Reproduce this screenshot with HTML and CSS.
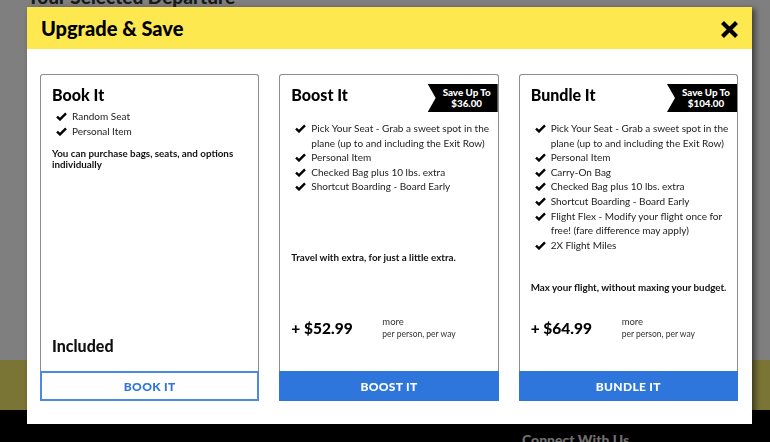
FILE: index.html
```html
<!DOCTYPE html>
<html lang="en">
<head>
  <meta charset="UTF-8">
  <meta name="viewport" content="width=device-width, initial-scale=1.0">
  <title>Upgrade &amp; Save</title>
  <link rel="stylesheet" href="styles.css">
</head>
<body>
  <div class="page">
    <h1 class="page-title">Your Selected Departure</h1>
    <div class="page-fill"></div>
    <div class="promo-band"></div>
    <footer class="footer">
      <h3>Connect With Us</h3>
    </footer>
  </div>

  <div class="backdrop"></div>

  <div class="modal">
    <div class="modal-header">
      <h2>Upgrade &amp; Save</h2>
      <button class="close" aria-label="Close">
        <svg width="19" height="19" viewBox="0 0 19 19"><path d="M2.5 2.5 L16.5 16.5 M16.5 2.5 L2.5 16.5" stroke="#000" stroke-width="4.2" fill="none"/></svg>
      </button>
    </div>

    <div class="options">
      <div class="option">
        <div class="option-body">
          <div>
            <div class="option-head">
              <h3>Book It</h3>
            </div>
            <ul class="perks">
              <li>Random Seat</li>
              <li>Personal Item</li>
            </ul>
            <p class="tagline tagline-tight">You can purchase bags, seats, and options individually</p>
          </div>
          <div class="included">Included</div>
        </div>
        <button class="select outline">BOOK IT</button>
      </div>

      <div class="option">
        <div class="option-body">
          <div>
            <div class="option-head">
              <h3>Boost It</h3>
              <div class="ribbon">Save Up To<br>$36.00</div>
            </div>
            <ul class="perks">
              <li>Pick Your Seat - Grab a sweet spot in the plane (up to and including the Exit Row)</li>
              <li>Personal Item</li>
              <li>Checked Bag plus 10 lbs. extra</li>
              <li>Shortcut Boarding - Board Early</li>
            </ul>
          </div>
          <p class="tagline">Travel with extra, for just a little extra.</p>
          <div class="price-row">
            <div class="price">+ $52.99</div>
            <div class="price-note">more<small>per person, per way</small></div>
          </div>
        </div>
        <button class="select">BOOST IT</button>
      </div>

      <div class="option">
        <div class="option-body">
          <div>
            <div class="option-head">
              <h3>Bundle It</h3>
              <div class="ribbon">Save Up To<br>$104.00</div>
            </div>
            <ul class="perks">
              <li>Pick Your Seat - Grab a sweet spot in the plane (up to and including the Exit Row)</li>
              <li>Personal Item</li>
              <li>Carry-On Bag</li>
              <li>Checked Bag plus 10 lbs. extra</li>
              <li>Shortcut Boarding - Board Early</li>
              <li>Flight Flex - Modify your flight once for free! (fare difference may apply)</li>
              <li>2X Flight Miles</li>
            </ul>
          </div>
          <p class="tagline">Max your flight, without maxing your budget.</p>
          <div class="price-row">
            <div class="price">+ $64.99</div>
            <div class="price-note">more<small>per person, per way</small></div>
          </div>
        </div>
        <button class="select">BUNDLE IT</button>
      </div>
    </div>
  </div>
</body>
</html>
```

FILE: styles.css
```css
body {
  margin: 0;
  font-family: Lato, 'Liberation Sans', sans-serif;
  color: #1a1a1a;
  overflow: hidden;
}

.page {
  height: 442px;
  display: flex;
  flex-direction: column;
  background: #fff;
}

.page-title {
  margin: -14px 0 0 27px;
  font-size: 19px;
  font-weight: 900;
  color: #333;
  line-height: 22px;
}

.page-fill {
  flex: 1;
}

.promo-band {
  height: 50px;
  background: #f5e96a;
}

.footer {
  height: 32px;
  background: #000;
  padding-left: 522px;
}

.footer h3 {
  margin: 0;
  padding-top: 21px;
  font-size: 14px;
  font-weight: 900;
  color: #dcdcdc;
}

.backdrop {
  position: fixed;
  inset: 0;
  background: rgba(0, 0, 0, 0.5);
}

.modal {
  position: fixed;
  left: 27px;
  top: 7px;
  width: 725px;
  height: 417px;
  background: #fff;
  box-shadow: 3px 2px 6px rgba(0, 0, 0, 0.55);
  display: flex;
  flex-direction: column;
}

.modal-header {
  height: 42px;
  background: #fde94f;
  display: flex;
  align-items: center;
  justify-content: space-between;
  padding: 0 13px 0 14px;
}

.modal-header h2 {
  margin: 0;
  font-size: 20px;
  font-weight: 900;
  color: #000;
}

.close {
  background: none;
  border: none;
  padding: 0;
  width: 19px;
  height: 19px;
  margin-top: 2px;
  cursor: pointer;
}

.close svg {
  display: block;
}

.options {
  flex: 1;
  display: grid;
  grid-template-columns: repeat(3, 1fr);
  gap: 20px;
  padding: 25px 14px 23px 13px;
}

.option {
  display: flex;
  flex-direction: column;
}

.option-body {
  flex: 1;
  display: flex;
  flex-direction: column;
  justify-content: space-between;
  border: 1px solid #8c8c8c;
  border-bottom: none;
  border-radius: 3px 3px 0 0;
  padding: 9px 6px 16px 11px;
}

.option-head {
  display: flex;
  justify-content: space-between;
  align-items: flex-start;
  min-height: 22px;
}

.option-head h3 {
  margin: 0;
  font-size: 16px;
  font-weight: 900;
  line-height: 22px;
  color: #000;
}

.ribbon {
  width: 62px;
  height: 28px;
  margin-right: -6px;
  margin-bottom: 6px;
  padding-left: 8px;
  background: #000;
  color: #fff;
  font-size: 9.8px;
  font-weight: 900;
  line-height: 11.5px;
  text-align: center;
  display: flex;
  align-items: center;
  justify-content: center;
  clip-path: polygon(0 0, 100% 0, 100% 100%, 0 100%, 8px 50%);
}

.perks {
  list-style: none;
  margin: 3px 0 0;
  padding: 0 0 0 20px;
  font-size: 10px;
  line-height: 14.6px;
  color: #222;
}

.perks li {
  position: relative;
}

.perks li::before {
  content: '';
  position: absolute;
  left: -16px;
  top: 3px;
  width: 11px;
  height: 9px;
  background: url("data:image/svg+xml,%3Csvg xmlns='http://www.w3.org/2000/svg' width='11' height='9' viewBox='0 0 11 9'%3E%3Cpath d='M1 4.6 L4 7.4 L10 1.3' stroke='%23000' stroke-width='2.4' fill='none'/%3E%3C/svg%3E") no-repeat;
}

.tagline {
  margin: 6px 0 0;
  font-size: 9.8px;
  font-weight: 700;
  line-height: 11px;
  color: #111;
}

.tagline-tight {
  margin-top: 10px;
}

.included {
  font-size: 16px;
  font-weight: 900;
  color: #111;
}

.price-row {
  display: flex;
  align-items: center;
  margin-bottom: 15px;
}

.price {
  width: 91px;
  font-size: 15.5px;
  font-weight: 900;
  color: #000;
}

.price-note {
  font-size: 9.5px;
  line-height: 12px;
  color: #333;
}

.price-note small {
  display: block;
  font-size: 8.5px;
}

.select {
  height: 30px;
  border: 2px solid #2f76dc;
  background: #2f76dc;
  color: #fff;
  font-family: inherit;
  font-size: 12px;
  font-weight: 900;
  letter-spacing: 0.3px;
  cursor: pointer;
}

.select.outline {
  background: #fff;
  color: #2f76dc;
  border-color: #4a8ae4;
}
```
